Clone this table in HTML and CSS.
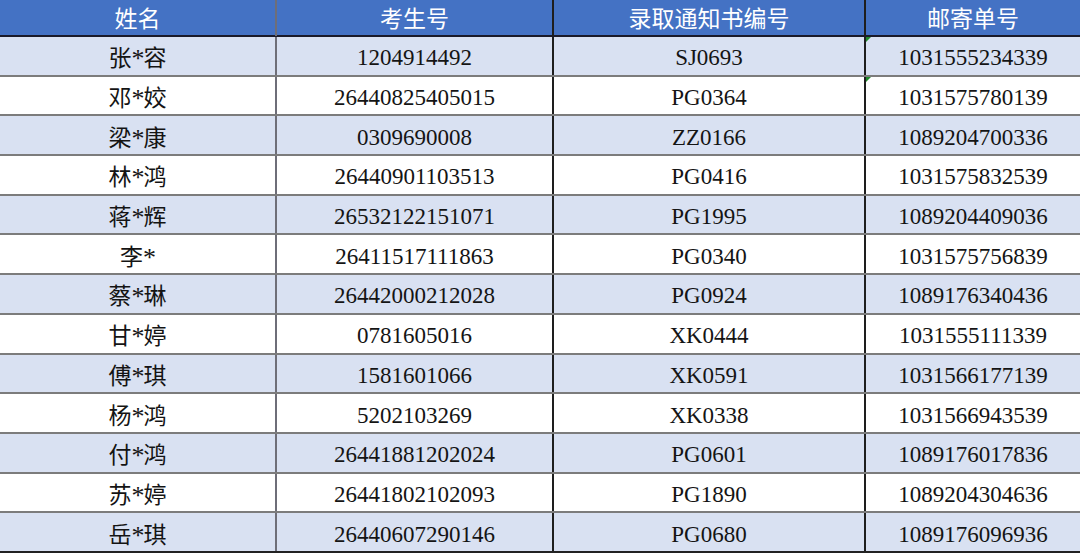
FILE: index.html
```html
<!DOCTYPE html>
<html lang="zh">
<head>
<meta charset="utf-8">
<link rel="stylesheet" href="styles.css">
</head>
<body>
<div class="sheet">
  <div class="row head">
    <div class="cell">姓名</div><div class="cell">考生号</div><div class="cell">录取通知书编号</div><div class="cell">邮寄单号</div>
  </div>
  <div class="row alt"><div class="cell">张<span class="star">*</span>容</div><div class="cell">1204914492</div><div class="cell">SJ0693</div><div class="cell flag">1031555234339</div></div>
  <div class="row"><div class="cell">邓<span class="star">*</span>姣</div><div class="cell">26440825405015</div><div class="cell">PG0364</div><div class="cell flag">1031575780139</div></div>
  <div class="row alt"><div class="cell">梁<span class="star">*</span>康</div><div class="cell">0309690008</div><div class="cell">ZZ0166</div><div class="cell">1089204700336</div></div>
  <div class="row"><div class="cell">林<span class="star">*</span>鸿</div><div class="cell">26440901103513</div><div class="cell">PG0416</div><div class="cell">1031575832539</div></div>
  <div class="row alt"><div class="cell">蒋<span class="star">*</span>辉</div><div class="cell">26532122151071</div><div class="cell">PG1995</div><div class="cell">1089204409036</div></div>
  <div class="row"><div class="cell">李<span class="star">*</span></div><div class="cell">26411517111863</div><div class="cell">PG0340</div><div class="cell">1031575756839</div></div>
  <div class="row alt"><div class="cell">蔡<span class="star">*</span>琳</div><div class="cell">26442000212028</div><div class="cell">PG0924</div><div class="cell">1089176340436</div></div>
  <div class="row"><div class="cell">甘<span class="star">*</span>婷</div><div class="cell">0781605016</div><div class="cell">XK0444</div><div class="cell">1031555111339</div></div>
  <div class="row alt"><div class="cell">傅<span class="star">*</span>琪</div><div class="cell">1581601066</div><div class="cell">XK0591</div><div class="cell">1031566177139</div></div>
  <div class="row"><div class="cell">杨<span class="star">*</span>鸿</div><div class="cell">5202103269</div><div class="cell">XK0338</div><div class="cell">1031566943539</div></div>
  <div class="row alt"><div class="cell">付<span class="star">*</span>鸿</div><div class="cell">26441881202024</div><div class="cell">PG0601</div><div class="cell">1089176017836</div></div>
  <div class="row"><div class="cell">苏<span class="star">*</span>婷</div><div class="cell">26441802102093</div><div class="cell">PG1890</div><div class="cell">1089204304636</div></div>
  <div class="row alt last"><div class="cell">岳<span class="star">*</span>琪</div><div class="cell">26440607290146</div><div class="cell">PG0680</div><div class="cell">1089176096936</div></div>
</div>
</body>
</html>
```
FILE: styles.css
```css
html, body {
  margin: 0;
  padding: 0;
  background: #ffffff;
}
.sheet {
  width: 1080px;
  font-family: "Liberation Serif", "Noto Sans CJK SC", serif;
  font-size: 23px;
  color: #141414;
}
.row {
  display: grid;
  grid-template-columns: 277px 277px 312px 214px;
  height: 39.7px;
  box-sizing: border-box;
  border-bottom: 2px solid #7c7c7c;
  background: #ffffff;
}
.row.alt {
  background: #d9e1f2;
}
.row.head {
  height: 37px;
  background: #4472c4;
  color: #ffffff;
  border-bottom: 2px solid #1a1a2a;
}
.row.last {
  border-bottom: 2px solid #222222;
}
.cell {
  position: relative;
  display: flex;
  align-items: center;
  justify-content: center;
  box-sizing: border-box;
  padding-top: 5px;
}
.cell:nth-child(1) {
  border-right: 2px solid #6e6e78;
  padding-top: 1px;
}
.cell:nth-child(2),
.cell:nth-child(3) {
  border-right: 2px solid #1e1e1e;
}
.head .cell {
  padding-top: 0;
  padding-bottom: 2px;
}
.star {
  display: inline-block;
  width: 12px;
  text-align: center;
  font-size: 26px;
  transform: translateY(3px);
}
.flag::before {
  content: "";
  position: absolute;
  left: 0;
  top: 0;
  width: 0;
  height: 0;
  border-top: 5px solid #1f8a2a;
  border-right: 5px solid transparent;
}
```
